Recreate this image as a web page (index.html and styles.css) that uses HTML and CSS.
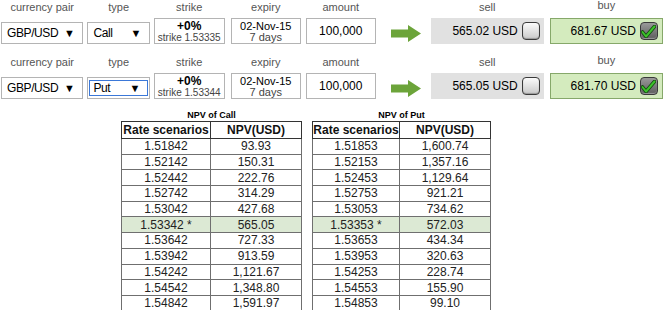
FILE: index.html
```html
<!DOCTYPE html>
<html>
<head>
  <title>FX Option Pricer</title>
  <link rel="stylesheet" href="styles.css">
</head>
<body>
  <div class="pricer">
    <!-- call leg -->
    <div class="trade-row">
      <div class="field f-pair">
        <span class="label">currency pair</span>
        <div class="box select">GBP/USD <span class="caret">&#9660;</span></div>
      </div>
      <div class="field f-type">
        <span class="label">type</span>
        <div class="box select">Call <span class="caret">&#9660;</span></div>
      </div>
      <div class="field f-strike">
        <span class="label">strike</span>
        <div class="box twoline"><b>+0%</b><small>strike 1.53335</small></div>
      </div>
      <div class="field f-expiry">
        <span class="label">expiry</span>
        <div class="box twoline"><span>02-Nov-15</span><small>7 days</small></div>
      </div>
      <div class="field f-amount">
        <span class="label">amount</span>
        <div class="box amount">100,000</div>
      </div>
      <div class="field f-arrow">
        <svg width="30" height="17" viewBox="0 0 30 17"><path d="M0 4.5h17V0l13 8.5-13 8.5v-4.5H0z" fill="#6ca43a"/></svg>
      </div>
      <div class="field f-price">
        <span class="label">sell</span>
        <div class="box price sell">565.02 USD <span class="check"></span></div>
      </div>
      <div class="field f-price">
        <span class="label up">buy</span>
        <div class="box price buy">681.67 USD <span class="check on"><svg width="15" height="13" viewBox="0 0 15 13"><path d="M1.5 7l3.5 4.5L13.5 1.5" fill="none" stroke="#124a0e" stroke-width="3.6" stroke-linecap="round" stroke-linejoin="round"/><path d="M1.5 7l3.5 4.5L13.5 1.5" fill="none" stroke="#3cc22a" stroke-width="2" stroke-linecap="round" stroke-linejoin="round"/></svg></span></div>
      </div>
    </div>

    <!-- put leg -->
    <div class="trade-row">
      <div class="field f-pair">
        <span class="label">currency pair</span>
        <div class="box select">GBP/USD <span class="caret">&#9660;</span></div>
      </div>
      <div class="field f-type">
        <span class="label">type</span>
        <div class="box select focused"><span class="inner">Put <span class="caret">&#9660;</span></span></div>
      </div>
      <div class="field f-strike">
        <span class="label">strike</span>
        <div class="box twoline"><b>+0%</b><small>strike 1.53344</small></div>
      </div>
      <div class="field f-expiry">
        <span class="label">expiry</span>
        <div class="box twoline"><span>02-Nov-15</span><small>7 days</small></div>
      </div>
      <div class="field f-amount">
        <span class="label">amount</span>
        <div class="box amount">100,000</div>
      </div>
      <div class="field f-arrow">
        <svg width="30" height="17" viewBox="0 0 30 17"><path d="M0 4.5h17V0l13 8.5-13 8.5v-4.5H0z" fill="#6ca43a"/></svg>
      </div>
      <div class="field f-price">
        <span class="label">sell</span>
        <div class="box price sell">565.05 USD <span class="check"></span></div>
      </div>
      <div class="field f-price">
        <span class="label up">buy</span>
        <div class="box price buy">681.70 USD <span class="check on"><svg width="15" height="13" viewBox="0 0 15 13"><path d="M1.5 7l3.5 4.5L13.5 1.5" fill="none" stroke="#124a0e" stroke-width="3.6" stroke-linecap="round" stroke-linejoin="round"/><path d="M1.5 7l3.5 4.5L13.5 1.5" fill="none" stroke="#3cc22a" stroke-width="2" stroke-linecap="round" stroke-linejoin="round"/></svg></span></div>
      </div>
    </div>

    <div class="tables">
      <div class="npv call">
        <div class="npv-title">NPV of Call</div>
        <table>
          <tr><th>Rate scenarios</th><th>NPV(USD)</th></tr>
          <tr><td>1.51842</td><td>93.93</td></tr>
          <tr><td>1.52142</td><td>150.31</td></tr>
          <tr><td>1.52442</td><td>222.76</td></tr>
          <tr><td>1.52742</td><td>314.29</td></tr>
          <tr><td>1.53042</td><td>427.68</td></tr>
          <tr class="spot"><td>1.53342 *</td><td>565.05</td></tr>
          <tr><td>1.53642</td><td>727.33</td></tr>
          <tr><td>1.53942</td><td>913.59</td></tr>
          <tr><td>1.54242</td><td>1,121.67</td></tr>
          <tr><td>1.54542</td><td>1,348.80</td></tr>
          <tr><td>1.54842</td><td>1,591.97</td></tr>
        </table>
      </div>
      <div class="npv put">
        <div class="npv-title">NPV of Put</div>
        <table>
          <tr><th>Rate scenarios</th><th>NPV(USD)</th></tr>
          <tr><td>1.51853</td><td>1,600.74</td></tr>
          <tr><td>1.52153</td><td>1,357.16</td></tr>
          <tr><td>1.52453</td><td>1,129.64</td></tr>
          <tr><td>1.52753</td><td>921.21</td></tr>
          <tr><td>1.53053</td><td>734.62</td></tr>
          <tr class="spot"><td>1.53353 *</td><td>572.03</td></tr>
          <tr><td>1.53653</td><td>434.34</td></tr>
          <tr><td>1.53953</td><td>320.63</td></tr>
          <tr><td>1.54253</td><td>228.74</td></tr>
          <tr><td>1.54553</td><td>155.90</td></tr>
          <tr><td>1.54853</td><td>99.10</td></tr>
        </table>
      </div>
    </div>
  </div>
</body>
</html>
```

FILE: styles.css
```css
body {
  margin: 0;
  font-family: "Liberation Sans", Arial, sans-serif;
  color: #000;
  background: #fff;
}

.pricer {
  width: 669px;
  height: 310px;
  overflow: hidden;
}

.trade-row {
  display: flex;
  align-items: flex-end;
  height: 44px;
  margin-bottom: 11px;
  padding-left: 1px;
}

.field {
  display: flex;
  flex-direction: column;
  align-items: center;
}

.label {
  font-size: 11px;
  color: #555;
  line-height: 12px;
  margin-bottom: 5px;
}

.label.up {
  margin-bottom: 7px;
}

.box {
  box-sizing: border-box;
  border: 1px solid #b4b4b4;
  background: #fff;
  width: 100%;
  height: 26px;
}

.f-pair { width: 83px; margin-right: 4px; }
.f-type { width: 63px; margin-right: 4px; }
.f-strike { width: 71px; margin-right: 6px; }
.f-expiry { width: 71px; margin-right: 5px; }
.f-amount { width: 70px; margin-right: 15px; }
.f-arrow { width: 30px; margin-right: 10px; padding-bottom: 2px; }
.f-price { width: 114px; margin-right: 6px; }

.f-pair .label, .f-type .label {
  margin-bottom: 9px;
}

.select {
  height: 22px;
  display: flex;
  align-items: center;
  justify-content: space-between;
  padding: 0 8px 0 5px;
  font-size: 12px;
  letter-spacing: -0.4px;
}

.caret {
  font-size: 11px;
}

.select.focused {
  padding: 2px 1px;
}

.select.focused .inner {
  flex: 1;
  height: 100%;
  box-sizing: border-box;
  border: 1px solid #3b78d8;
  display: flex;
  align-items: center;
  justify-content: space-between;
  padding: 0 7px 0 3px;
}

.twoline {
  display: flex;
  flex-direction: column;
  align-items: center;
  justify-content: center;
  font-size: 11px;
  line-height: 12px;
  white-space: nowrap;
}

.twoline b {
  font-size: 12px;
}

.twoline small {
  font-size: 10px;
  color: #444;
  line-height: 11px;
}

.f-expiry small {
  font-size: 11px;
}

.amount {
  display: flex;
  align-items: center;
  justify-content: center;
  font-size: 12px;
}

.price {
  display: flex;
  align-items: center;
  justify-content: flex-end;
  padding-right: 4px;
  font-size: 12px;
}

.sell {
  border: none;
  background: #e1e1e1;
}

.buy {
  border: 1px solid #86a86a;
  background: #d4ebbe;
}

.check {
  display: inline-flex;
  align-items: center;
  justify-content: center;
  width: 16px;
  height: 16px;
  margin-left: 4px;
  border: 1px solid #3a3a3a;
  border-radius: 4px;
  background: linear-gradient(#fbfbfb, #c9c9c9);
  box-shadow: inset 0 -1px 1px #999;
}

.check.on {
  background: linear-gradient(#9a9a9a, #5d5d5d);
}

.tables {
  display: flex;
  padding-left: 121px;
  margin-top: 6px;
}

.npv {
  margin-right: 10px;
}

.npv-title {
  text-align: center;
  font-size: 9px;
  font-weight: bold;
  line-height: 11px;
  color: #000;
}

.npv table {
  border-collapse: collapse;
  font-size: 12px;
  color: #222;
}

.npv th,
.npv td {
  border: 1px solid #6f6f6f;
  text-align: center;
  padding: 0;
  height: 14.7px;
  line-height: 14px;
  white-space: nowrap;
}

.npv th {
  font-weight: bold;
  color: #111;
  height: 16px;
  border-color: #333;
}

.call th:first-child, .call td:first-child { width: 88px; }
.call th:last-child, .call td:last-child { width: 90px; }
.put th:first-child, .put td:first-child { width: 86px; }
.put th:last-child, .put td:last-child { width: 90px; }

.spot td {
  background: #dce9d4;
}
```
